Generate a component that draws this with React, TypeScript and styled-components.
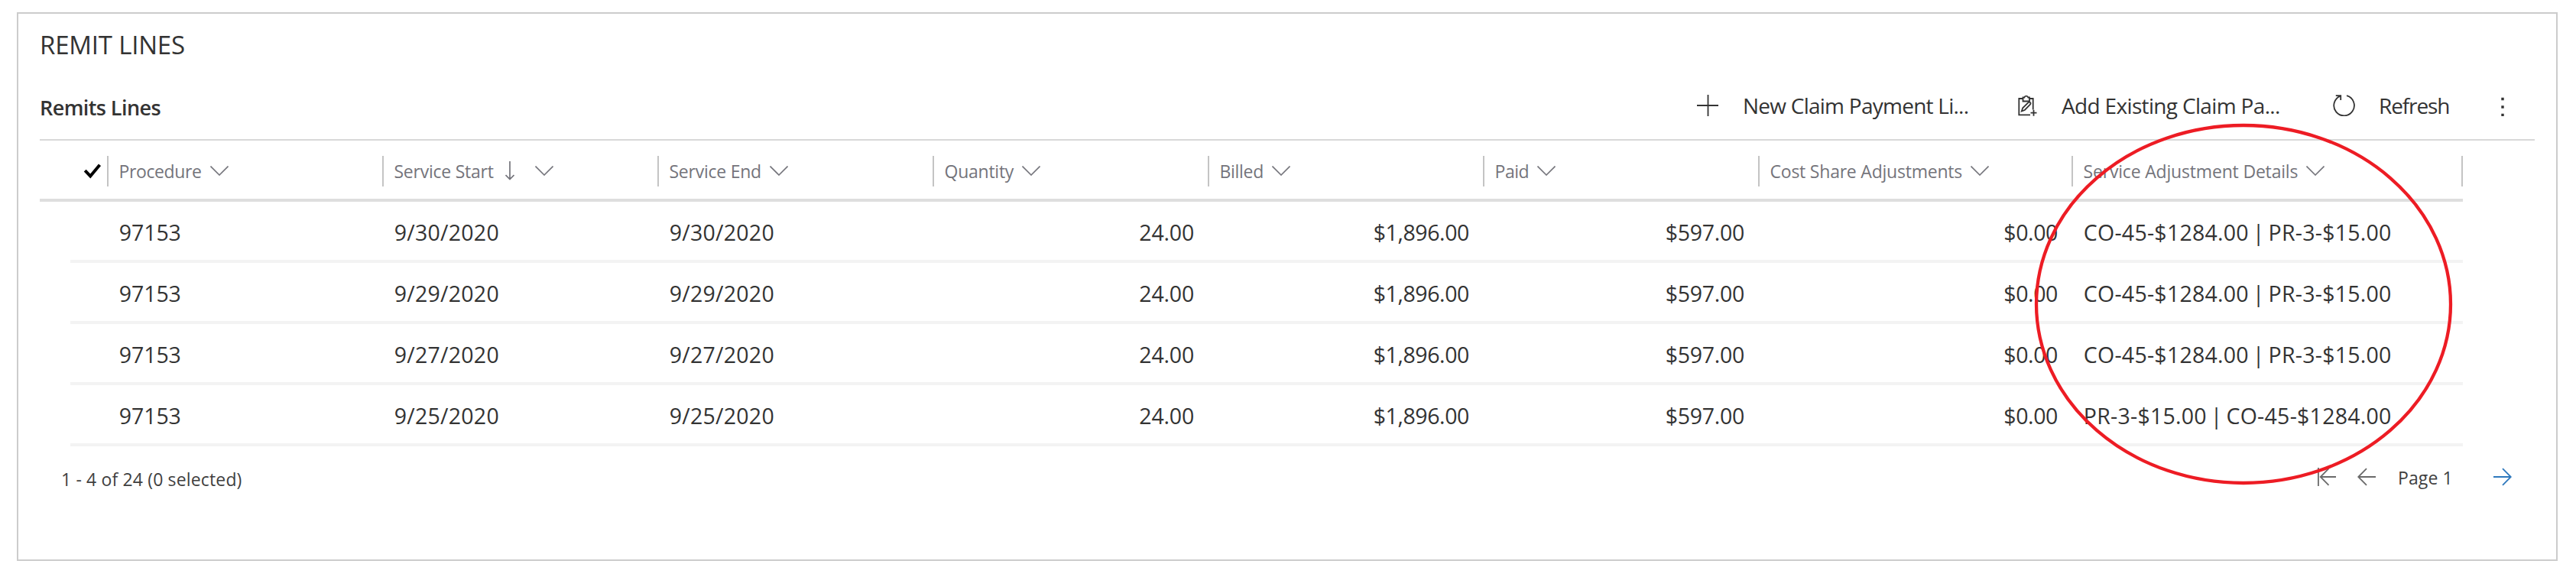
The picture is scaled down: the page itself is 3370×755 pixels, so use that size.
import React from "react";
import styled, { createGlobalStyle } from "styled-components";

const GlobalStyle = createGlobalStyle`
  * { box-sizing: border-box; }
  body {
    margin: 0;
    background: #fff;
    color: #333;
    font-family: "Open Sans", "Noto Sans", sans-serif;
  }
`;

const Page = styled.main`
  position: relative;
  width: 3370px;
  height: 755px;
  padding: 16px 24px 21px 22px;
`;

const Card = styled.section`
  height: 718px;
  padding: 0 28px;
  border: 2px solid #ccc;
  background: #fff;
`;

const Title = styled.h1`
  height: 80px;
  margin: 0;
  padding-top: 1px;
  font-size: 33px;
  font-weight: 390;
  line-height: 80px;
  letter-spacing: -0.2px;
`;

const CommandRow = styled.header`
  display: flex;
  justify-content: space-between;
  align-items: center;
  height: 86px;
  border-bottom: 2px solid #d8d8d8;
`;

const Subtitle = styled.h2`
  margin: 0;
  font-size: 27px;
  font-weight: 600;
  letter-spacing: -0.58px;
`;

const Toolbar = styled.div`
  display: flex;
  align-items: center;
  padding-bottom: 4px;
`;

const Command = styled.button<{ $width: number; $gap: number; $tracking: number }>`
  display: flex;
  align-items: center;
  gap: ${(p) => p.$gap}px;
  width: ${(p) => p.$width}px;
  padding: 0;
  border: 0;
  background: none;
  color: inherit;
  font: inherit;
  font-size: 28px;
  font-weight: 370;
  letter-spacing: ${(p) => p.$tracking}px;
  white-space: nowrap;
`;

const Icon = styled.svg`
  display: block;
  flex: none;
  fill: none;
  stroke: currentColor;
  stroke-width: 1.8;
`;

const HeaderRow = styled.div`
  display: flex;
  align-items: center;
  width: 3170px;
  height: 80px;
  padding-top: 4px;
  border-bottom: 4px solid #dedede;
  color: #74747b;
`;

const SelectAll = styled.div`
  display: flex;
  align-items: center;
  width: 88px;
  padding-left: 57px;
  color: #000;
`;

const HeaderCell = styled.div<{ $width: number; $tracking: number }>`
  display: flex;
  align-items: center;
  width: ${(p) => p.$width}px;
  height: 40px;
  padding-left: 13.5px;
  border-left: 2px solid #c4c4c4;
  font-size: 23px;
  font-weight: 400;
  letter-spacing: ${(p) => p.$tracking}px;
  white-space: nowrap;

  &:last-child {
    width: ${(p) => p.$width + 2}px;
    border-right: 2px solid #c4c4c4;
  }
`;

const ChevronIcon = styled(Icon)`
  margin: 0 0 2px 11px;
  stroke-width: 1.6;
`;

const SortIcon = styled(Icon)`
  margin: 0 16.5px 2px 15px;
  stroke-width: 1.7;
`;

const Row = styled.div`
  display: flex;
  width: 3130px;
  height: 80px;
  margin-left: 40px;
  padding: 4px 0 0 48px;
  border-bottom: 4px solid #f3f3f3;
`;

const Cell = styled.div<{ $width: number; $right?: boolean; $tracking: number }>`
  width: ${(p) => p.$width}px;
  padding: 0 18px 0 ${(p) => (p.$right ? 0 : 15.8)}px;
  font-size: 28.5px;
  font-weight: 380;
  line-height: 72px;
  text-align: ${(p) => (p.$right ? "right" : "left")};
  letter-spacing: ${(p) => p.$tracking}px;
  word-spacing: -2.8px;
  white-space: nowrap;
`;

const Footer = styled.footer`
  display: flex;
  justify-content: space-between;
  align-items: center;
  height: 86px;
  padding: 0 30px 0 28px;
  color: #3f3f3f;
  font-size: 23px;
  font-weight: 390;
`;

const Status = styled.span`
  letter-spacing: 0.15px;
`;

const Pager = styled.nav`
  display: flex;
  align-items: center;
  padding-bottom: 6px;
  color: #6a6a6a;
`;

const PageLabel = styled.span`
  width: 125px;
  margin-left: 29.5px;
  padding-top: 2px;
  color: #3f3f3f;
  letter-spacing: 0.1px;
`;

const PreviousIcon = styled(Icon)`
  margin-left: 28px;
`;

const NextIcon = styled(Icon)`
  color: #2f79bd;
`;

const Highlight = styled.svg`
  position: absolute;
  left: 2660px;
  top: 160px;
  fill: none;
  stroke: #ed1c24;
  stroke-width: 4.3;
  pointer-events: none;
`;

type Column = {
  label: string;
  width: number;
  headTracking: number;
  tracking: number;
  right?: boolean;
  sorted?: boolean;
};

const columns: Column[] = [
  { label: "Procedure", width: 360, headTracking: -0.38, tracking: -0.1 },
  { label: "Service Start", width: 360, headTracking: -0.24, tracking: 0.24, sorted: true },
  { label: "Service End", width: 360, headTracking: -0.24, tracking: 0.24 },
  { label: "Quantity", width: 360, headTracking: -0.25, tracking: -0.2, right: true },
  { label: "Billed", width: 360, headTracking: -0.3, tracking: -0.4, right: true },
  { label: "Paid", width: 360, headTracking: -0.45, tracking: -0.3, right: true },
  { label: "Cost Share Adjustments", width: 410, headTracking: -0.22, tracking: -0.4, right: true },
  { label: "Service Adjustment Details", width: 510, headTracking: -0.18, tracking: 0.25 },
];

const line = (date: string, details: string) => [
  "97153", date, date, "24.00", "$1,896.00", "$597.00", "$0.00", details,
];

const rows = [
  line("9/30/2020", "CO-45-$1284.00 | PR-3-$15.00"),
  line("9/29/2020", "CO-45-$1284.00 | PR-3-$15.00"),
  line("9/27/2020", "CO-45-$1284.00 | PR-3-$15.00"),
  line("9/25/2020", "PR-3-$15.00 | CO-45-$1284.00"),
];

export default function App() {
  return (
    <Page>
      <GlobalStyle />
      <Card>
        <Title>REMIT LINES</Title>
        <CommandRow>
          <Subtitle>Remits Lines</Subtitle>
          <Toolbar>
            <Command $width={420} $gap={32} $tracking={-0.75}>
              <Icon width="28" height="28" viewBox="0 0 28 28">
                <path d="M14.5 0v28M0 14h28.500" />
              </Icon>
              New Claim Payment Li...
            </Command>
            <Command $width={412} $gap={31} $tracking={-0.66}>
              <Icon width="26" height="28" viewBox="0 0 26 28">
                <path d="M16 26.300H1.300V5H6M15 5h4.700V19.500" />
                <path d="M6.500 3.500H8.300a2.600 2.600 0 0 1 5 0H15V8.500H6.500z" />
                <path d="M4.800 21.500l1.400-4.200 7.300-7.200a1.700 1.700 0 0 1 2.500 2.500l-7.200 7.400z" />
                <path d="M20.500 19.700v8M16.500 23.700h8" />
              </Icon>
              Add Existing Claim Pa...
            </Command>
            <Command $width={220} $gap={30} $tracking={-1.1}>
              <Icon width="30" height="28" viewBox="0 0 30 28">
                <path d="M18 1.200A13.300 13.300 0 1 1 9.900 1.600" />
                <path d="M3.800 1.100H10.200V7" />
              </Icon>
              Refresh
            </Command>
            <Command $width={44} $gap={0} $tracking={0} aria-label="More commands">
              <Icon width="4" height="28" viewBox="0 0 4 28">
                <path d="M.3 5.500h3.400M.3 16h3.400M.3 26.500h3.400" strokeWidth="3.4" />
              </Icon>
            </Command>
          </Toolbar>
        </CommandRow>

        <HeaderRow>
          <SelectAll>
            <Icon width="24" height="20" viewBox="0 0 24 20">
              <path d="M2.200 9.200l7 7.300L21.500 1.800" strokeWidth="4" />
            </Icon>
          </SelectAll>
          {columns.map((c) => (
            <HeaderCell key={c.label} $width={c.width} $tracking={c.headTracking}>
              {c.label}
              {c.sorted && (
                <SortIcon width="12" height="25" viewBox="0 0 12 25">
                  <path d="M6 0v23.500M.5 18l5.500 5.500 5.500-5.500" />
                </SortIcon>
              )}
              <ChevronIcon width="24" height="13" viewBox="0 0 24 13">
                <path d="M.5.5L12 12 23.500.5" />
              </ChevronIcon>
            </HeaderCell>
          ))}
        </HeaderRow>

        {rows.map((values) => (
          <Row key={values[1]}>
            {values.map((value, i) => (
              <Cell key={i} $width={columns[i].width} $right={columns[i].right} $tracking={columns[i].tracking}>
                {value}
              </Cell>
            ))}
          </Row>
        ))}

        <Footer>
          <Status>1 - 4 of 24 (0 selected)</Status>
          <Pager>
            <Icon width="24" height="24" viewBox="0 0 24 24">
              <path d="M.9 0v24M24 12H4M14.500 1.200L3.700 12l10.800 10.800" />
            </Icon>
            <PreviousIcon width="24" height="24" viewBox="0 0 24 24">
              <path d="M24 12H1.500M12 1.200L1.200 12 12 22.800" />
            </PreviousIcon>
            <PageLabel>Page 1</PageLabel>
            <NextIcon width="24" height="24" viewBox="0 0 24 24">
              <path d="M0 12h22.500M12 1.200L22.800 12 12 22.800" />
            </NextIcon>
          </Pager>
        </Footer>
      </Card>
      <Highlight width="550" height="476" viewBox="0 0 550 476">
        <ellipse cx="275" cy="238" rx="271" ry="234" />
      </Highlight>
    </Page>
  );
}
